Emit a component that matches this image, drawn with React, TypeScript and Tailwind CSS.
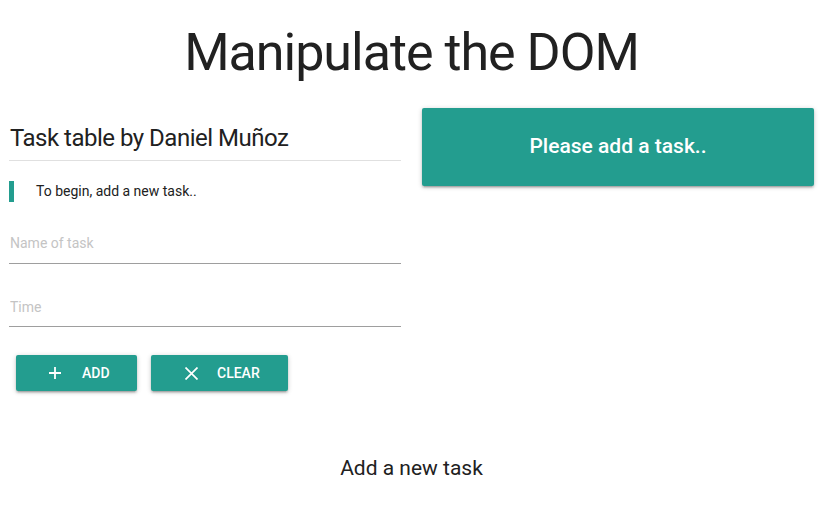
import { useState } from "react";

const TEAL = "bg-[#239d8f]";

function PlusIcon() {
  return (
    <svg width="12" height="12" viewBox="0 0 12 12" className="shrink-0">
      <path d="M6 0v12M0 6h12" stroke="white" strokeWidth="1.8" />
    </svg>
  );
}

function CloseIcon() {
  return (
    <svg width="13" height="13" viewBox="0 0 13 13" className="shrink-0">
      <path d="M0.5 0.5l12 12M12.5 0.5l-12 12" stroke="white" strokeWidth="1.7" />
    </svg>
  );
}

export default function App() {
  const [name, setName] = useState("");
  const [time, setTime] = useState("");

  return (
    <div className="min-h-[532px] bg-white text-[#212121] font-['Roboto','Liberation_Sans',sans-serif]">
      {/* titulo principal */}
      <h1 className="pt-[24px] text-center text-[52px] leading-[1.1] font-normal tracking-[-1px]">
        Manipulate the DOM
      </h1>

      <div className="mt-[27px] flex gap-[21px] px-[9px]">
        {/* columna izquierda: formulario */}
        <div className="flex-1">
          <h2 className="mt-[14px] pb-[6px] border-b border-[#e0e0e0] text-[24px] leading-[32px] font-normal tracking-[-0.5px] pl-px">
            Task table by Daniel Muñoz
          </h2>

          <blockquote className="mt-[20px] border-l-[5px] border-[#239d8f] pl-[22px] text-[14px] leading-[21px]">
            To begin, add a new task..
          </blockquote>

          <input
            value={name}
            onChange={(e) => setName(e.target.value)}
            placeholder="Name of task"
            className="mt-[17px] block w-full h-[45px] pt-[4px] border-b border-[#9e9e9e] bg-transparent text-[14px] outline-none placeholder:text-[#c4c4c4] pl-px"
          />
          <input
            value={time}
            onChange={(e) => setTime(e.target.value)}
            placeholder="Time"
            className="mt-[18px] block w-full h-[45px] pt-[5px] border-b border-[#9e9e9e] bg-transparent text-[14px] outline-none placeholder:text-[#c4c4c4] pl-px"
          />

          <div className="mt-[28px] ml-[7px] flex gap-[14px]">
            <button
              onClick={() => {}}
              className={`${TEAL} h-[36px] w-[121px] pl-[33px] flex items-center gap-[21px] rounded-[2px] text-white text-[14px] font-medium shadow-[0_2px_2px_0_rgba(0,0,0,0.14),0_3px_1px_-2px_rgba(0,0,0,0.12),0_1px_5px_0_rgba(0,0,0,0.2)]`}
            >
              <PlusIcon />
              ADD
            </button>
            <button
              onClick={() => {
                setName("");
                setTime("");
              }}
              className={`${TEAL} h-[36px] w-[137px] pl-[34px] flex items-center gap-[19px] rounded-[2px] text-white text-[14px] font-medium shadow-[0_2px_2px_0_rgba(0,0,0,0.14),0_3px_1px_-2px_rgba(0,0,0,0.12),0_1px_5px_0_rgba(0,0,0,0.2)]`}
            >
              <CloseIcon />
              CLEAR
            </button>
          </div>
        </div>

        {/* columna derecha: tareas */}
        <div className="flex-1">
          <div
            className={`${TEAL} h-[78px] flex items-center justify-center rounded-[2px] text-white text-[21px] font-medium shadow-[0_2px_2px_0_rgba(0,0,0,0.14),0_3px_1px_-2px_rgba(0,0,0,0.12),0_1px_5px_0_rgba(0,0,0,0.2)]`}
          >
            Please add a task..
          </div>
        </div>
      </div>

      <p className="mt-[63px] text-center text-[21px] leading-[28px]">Add a new task</p>
    </div>
  );
}
